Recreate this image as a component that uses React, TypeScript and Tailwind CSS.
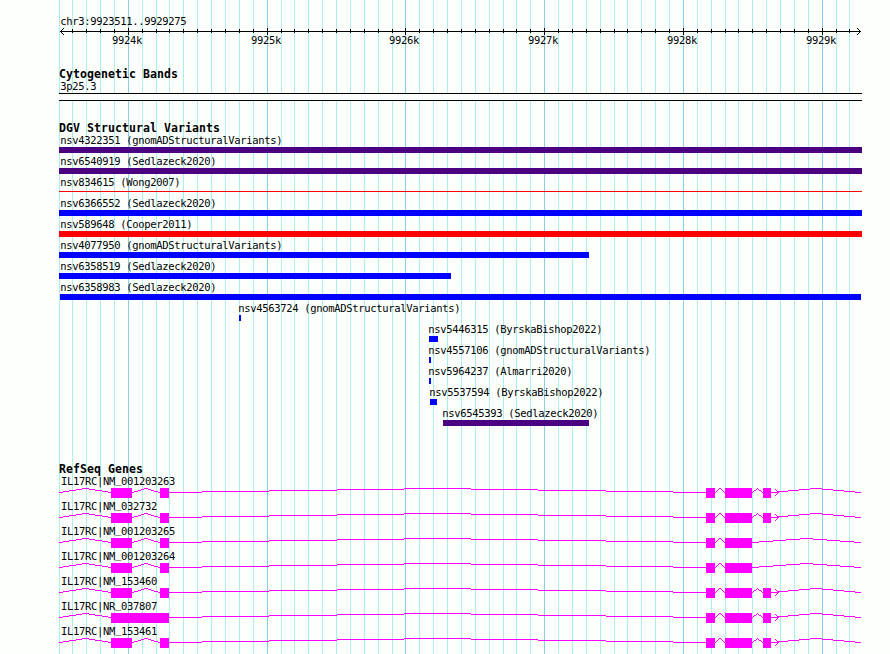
import React from "react";

type Feature = { label: string; start: number; end: number; color: string; offset: number; thin?: boolean };
type Gene = { prefix: string; name: string; exons: [number, number][]; introns: [number, number][]; arrow: boolean };

const LEFT = 59;

const variants: Feature[] = [
  { label: "nsv4322351 (gnomADStructuralVariants)", start: 59, end: 862, color: "bg-[#4b0082]", offset: 1.2 },
  { label: "nsv6540919 (Sedlazeck2020)", start: 59, end: 862, color: "bg-[#4b0082]", offset: 1.2 },
  { label: "nsv834615 (Wong2007)", start: 59, end: 862, color: "bg-[#ff0000]", offset: 1.2, thin: true },
  { label: "nsv6366552 (Sedlazeck2020)", start: 59, end: 862, color: "bg-[#0000ff]", offset: 1.2 },
  { label: "nsv589648 (Cooper2011)", start: 59, end: 862, color: "bg-[#ff0000]", offset: 1.2 },
  { label: "nsv4077950 (gnomADStructuralVariants)", start: 59, end: 589, color: "bg-[#0000ff]", offset: 1.2 },
  { label: "nsv6358519 (Sedlazeck2020)", start: 59, end: 451, color: "bg-[#0000ff]", offset: 1.2 },
  { label: "nsv6358983 (Sedlazeck2020)", start: 60, end: 861, color: "bg-[#0000ff]", offset: 0.2 },
  { label: "nsv4563724 (gnomADStructuralVariants)", start: 239, end: 241, color: "bg-[#0000ff]", offset: -0.8 },
  { label: "nsv5446315 (ByrskaBishop2022)", start: 429, end: 438, color: "bg-[#0000ff]", offset: -0.8 },
  { label: "nsv4557106 (gnomADStructuralVariants)", start: 429, end: 431, color: "bg-[#0000ff]", offset: -0.8 },
  { label: "nsv5964237 (Almarri2020)", start: 429, end: 431, color: "bg-[#0000ff]", offset: -0.8 },
  { label: "nsv5537594 (ByrskaBishop2022)", start: 430, end: 437, color: "bg-[#0000ff]", offset: -0.8 },
  { label: "nsv6545393 (Sedlazeck2020)", start: 443, end: 589, color: "bg-[#4b0082]", offset: -0.8 },
];

const fullExons: [number, number][] = [[111, 132], [160, 169], [706, 715], [725, 752], [763, 771]];
const fullIntrons: [number, number][] = [[59, 111], [132, 159], [168, 706], [715, 724], [752, 762], [771, 860]];
const shortExons: [number, number][] = [[111, 132], [160, 169], [706, 715], [725, 752]];
const shortIntrons: [number, number][] = [[59, 111], [132, 159], [168, 706], [715, 724], [752, 860]];

const genes: Gene[] = [
  { prefix: "NM", name: "001203263", exons: fullExons, introns: fullIntrons, arrow: true },
  { prefix: "NM", name: "032732", exons: fullExons, introns: fullIntrons, arrow: true },
  { prefix: "NM", name: "001203265", exons: shortExons, introns: shortIntrons, arrow: false },
  { prefix: "NM", name: "001203264", exons: shortExons, introns: shortIntrons, arrow: false },
  { prefix: "NM", name: "153460", exons: fullExons, introns: fullIntrons, arrow: true },
  {
    prefix: "NR",
    name: "037807",
    exons: [[111, 169], [706, 715], [725, 752], [763, 771]],
    introns: [[59, 111], [168, 706], [715, 724], [752, 762], [771, 860]],
    arrow: true,
  },
  { prefix: "NM", name: "153461", exons: fullExons, introns: fullIntrons, arrow: true },
];

const ticks = Array.from({ length: 57 }, (_, i) => i - 4).map((n) => ({
  x: Math.floor(128.356 + 13.877 * n),
  major: n % 10 === 0,
})).filter((t) => t.x < 862);

// Stepped hat: rises four pixels to the middle of the intron, then falls back.
function hat([a, b]: [number, number]) {
  const mid = (a + b) / 2;
  let d = "";
  let runStart = a;
  const level = (x: number) => {
    const f = 1 - Math.abs(x - mid) / (mid - a);
    return 4 - Math.round(f * 4);
  };
  for (let x = a; x <= b; x++) {
    if (x === b || level(x + 1) !== level(runStart)) {
      d += `M${runStart - LEFT} ${level(runStart)}h${x + 1 - runStart}v1H${runStart - LEFT}z`;
      runStart = x + 1;
    }
  }
  return d;
}

const small = "block whitespace-pre font-['DejaVu_Sans_Mono',monospace] text-[10.5px] tracking-[-0.322px] leading-[12px]";
const title = "block whitespace-pre font-['DejaVu_Sans_Mono',monospace] font-bold text-[11.5px] tracking-[0.076px] leading-[12px]";

function Grid() {
  return (
    <svg className="absolute inset-0" width="890" height="654" shapeRendering="crispEdges">
      <rect x={59} y={0} width={1} height={654} fill="#afeeee" />
      {ticks.map((t) => (
        <rect key={t.x} x={t.x} y={0} width={1} height={654} fill={t.major ? "#87ceeb" : "#afeeee"} />
      ))}
    </svg>
  );
}

function Ruler() {
  return (
    <div className="relative h-8">
      <svg className="block" width="803" height="10" shapeRendering="crispEdges">
        <path d="M1 4h801v1H1z" fill="#000" />
        {ticks.map((t) => (
          <rect key={t.x} x={t.x - LEFT} y={t.major ? 1 : 2} width={1} height={t.major ? 7 : 4} fill="#000" />
        ))}
        <path
          d="M1 4h1v1h-1zM2 3h1v3h-1zM3 2h1v1h-1zM3 6h1v1h-1zM4 1h1v1h-1zM4 7h1v1h-1zM800 3h1v3h-1zM799 2h1v1h-1zM799 6h1v1h-1zM798 1h1v1h-1zM798 7h1v1h-1z"
          fill="#000"
        />
      </svg>
      {ticks.filter((t) => t.major).map((t, i) => (
        <span key={t.x} className={`${small} absolute top-[7px]`} style={{ left: t.x - LEFT - 15.9 }}>
          {9924 + i}k
        </span>
      ))}
    </div>
  );
}

function GeneRow({ gene }: { gene: Gene }) {
  return (
    <div className="h-[25px]">
      <span className={`${small} h-[13px] pl-[2px]`}>
        IL17RC|{gene.prefix}
        <span className="relative -top-[2px]">_</span>
        {gene.name}
      </span>
      <svg className="block" width="803" height="11" shapeRendering="crispEdges" fill="#ff00ff">
        {gene.introns.map((n) => (
          <path key={n[0]} d={hat(n)} />
        ))}
        {gene.exons.map(([a, b]) => (
          <rect key={a} x={a - LEFT} y={0} width={b - a} height={10} />
        ))}
        {gene.arrow && <path d="M712 4h8v1h-8zM718 3h1v3h-1zM717 2h1v1h-1zM717 6h1v1h-1zM716 1h1v1h-1zM716 7h1v1h-1z" />}
      </svg>
    </div>
  );
}

export default function App() {
  return (
    <div className="relative h-[654px] w-[890px] overflow-hidden bg-[#fcfffc] text-black">
      <Grid />
      <main className="relative ml-[59px] flex w-[803px] flex-col pt-[15px]">
        <header className="h-[53px]">
          <span className={`${small} pl-[1.2px]`}>chr3:9923511..9929275</span>
          <Ruler />
        </header>
        <section className="h-[54px]">
          <h2 className={title}>Cytogenetic Bands</h2>
          <span className={`${small} h-[13px] pl-[1.2px]`}>3p25.3</span>
          <div className="h-2 border-y border-black bg-[#fcfffc]" />
        </section>
        <section className="h-[341px]">
          <h2 className={title}>DGV Structural Variants</h2>
          {variants.map((v) => (
            <div key={v.label} className="h-[21px]" style={{ paddingLeft: v.start - LEFT }}>
              <span className={`${small} h-[13px]`} style={{ marginLeft: v.offset }}>
                {v.label}
              </span>
              <div className={`${v.color} ${v.thin ? "mt-[2px] h-px" : "h-1.5"}`} style={{ width: v.end - v.start }} />
            </div>
          ))}
        </section>
        <section>
          <h2 className={title}>RefSeq Genes</h2>
          {genes.map((g) => (
            <GeneRow key={g.name} gene={g} />
          ))}
        </section>
      </main>
    </div>
  );
}
